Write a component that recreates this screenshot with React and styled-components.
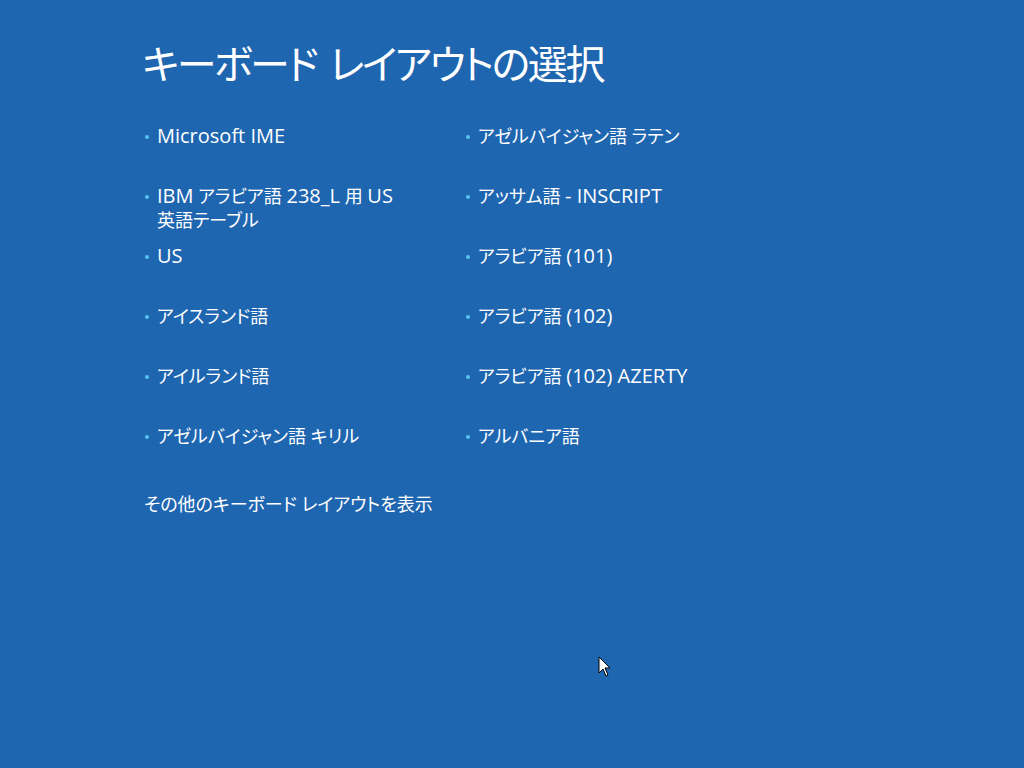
import React from 'react';
import styled, { createGlobalStyle } from 'styled-components';

const Global = createGlobalStyle`
html, body {
  margin: 0;
  padding: 0;
  height: 100%;
  background: #1f66b1;
}
#root {
  height: 100%;
}
`

const Screen = styled.div`
position: relative;
box-sizing: border-box;
width: 100%;
height: 100vh;
overflow: hidden;
padding: 37px 0 0 142px;
color: #ffffff;
font-family: "Open Sans", "Noto Sans CJK JP", sans-serif;
font-feature-settings: "palt" 1;
`

const Title = styled.h1`
margin: 0;
font-weight: 400;
font-size: 40px;
line-height: 50px;
letter-spacing: -2.4px;
word-spacing: 6px;
font-family: "Noto Sans CJK JP", sans-serif;
font-feature-settings: "palt" 1;
`

const Grid = styled.ul`
list-style: none;
margin: 37px 0 0 3px;
padding: 0;
display: grid;
grid-template-columns: 321px 321px;
grid-auto-flow: column;
grid-template-rows: repeat(6, 60px);
`

const Item = styled.li`
display: flex;
align-items: flex-start;
font-size: 18px;
line-height: 24px;
`

const Dot = styled.span`
flex: none;
width: 4px;
height: 4px;
margin: 11px 8px 0 0;
border-radius: 2px;
background: #56c2ee;
`

const Label = styled.span`
max-width: 250px;
`

// latin runs are set a size larger, like the UI font in the shot
const Latin = styled.span`
font-size: 20px;
`

const More = styled.div`
margin-top: 8px;
margin-left: 2px;
font-size: 18px;
line-height: 24px;
`

const Cursor = styled.svg`
position: absolute;
left: 598px;
top: 656px;
`

const left = [
  'Microsoft IME',
  'IBM アラビア語 238_L 用 US 英語テーブル',
  'US',
  'アイスランド語',
  'アイルランド語',
  'アゼルバイジャン語 キリル',
]

const right = [
  'アゼルバイジャン語 ラテン',
  'アッサム語 - INSCRIPT',
  'アラビア語 (101)',
  'アラビア語 (102)',
  'アラビア語 (102) AZERTY',
  'アルバニア語',
]

function Text({ children }) {
  const parts = children.split(/([A-Za-z0-9_()\-]+(?: [A-Za-z0-9_()\-]+)*)/)
  return parts.map((p, i) => (i % 2 ? <Latin key={i}>{p}</Latin> : p))
}

export default function App() {
  return (
    <Screen>
      <Global />
      <Title>キーボード レイアウトの選択</Title>
      <Grid>
        {left.concat(right).map(label => (
          <Item key={label}>
            <Dot />
            <Label><Text>{label}</Text></Label>
          </Item>
        ))}
      </Grid>
      <More>その他のキーボード レイアウトを表示</More>
      <Cursor width="14" height="22" viewBox="0 0 14 22">
        <path d="M1 1 L1 17 L5 13 L8 20 L10 19 L7 12 L12 12 Z" fill="#fff" stroke="#000" strokeWidth="1" strokeLinejoin="miter" />
      </Cursor>
    </Screen>
  )
}
